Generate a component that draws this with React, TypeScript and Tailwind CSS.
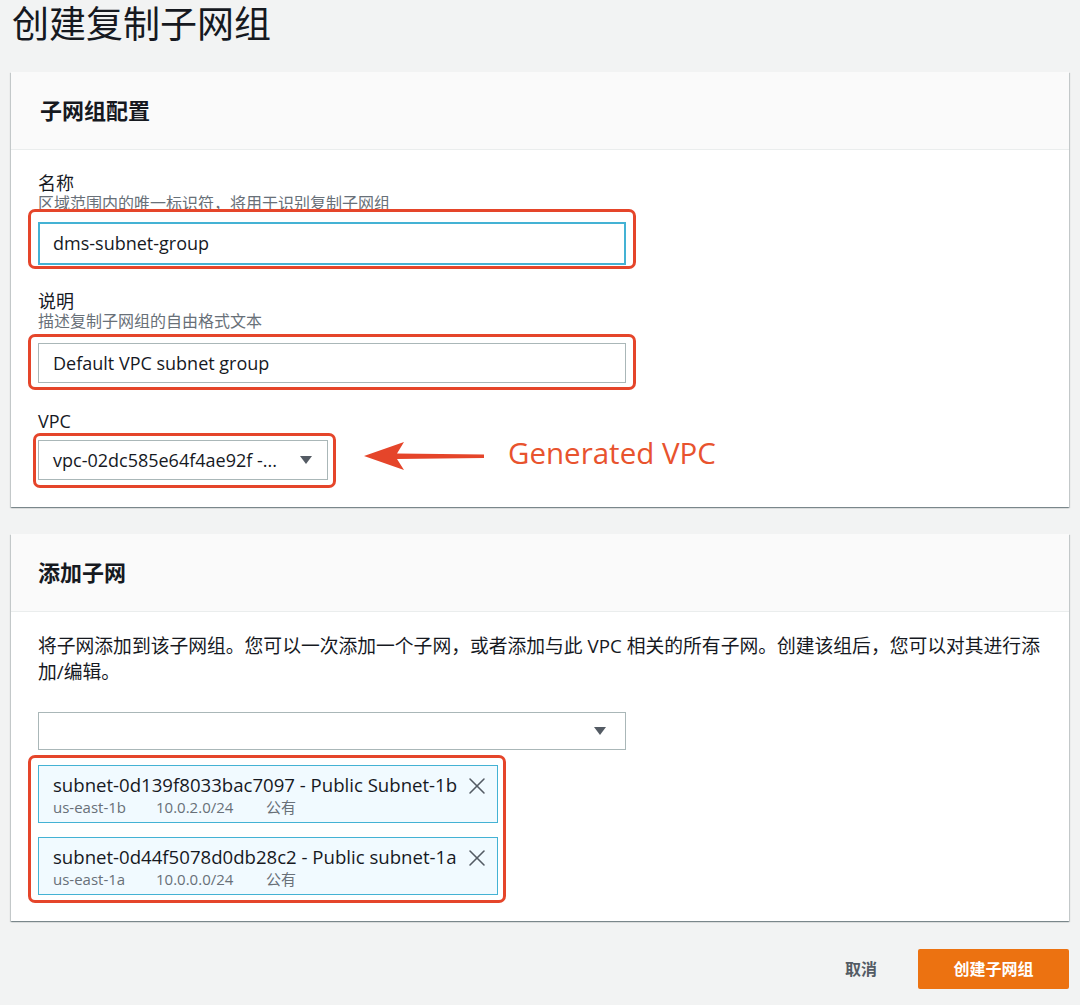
import { X } from 'lucide-react';

const font = "font-['Open_Sans','Noto_Sans_CJK_SC',sans-serif]";

function RedBox({ className }: { className: string }) {
  return <div className={`pointer-events-none absolute rounded-[7px] border-[3px] border-[#e5452a] ${className}`} />;
}

function Caret() {
  return (
    <svg width="14" height="10" viewBox="0 0 14 10" className="shrink-0">
      <path d="M1 1h12L7 9z" fill="#545b64" />
    </svg>
  );
}

const subnets = [
  { id: 'subnet-0d139f8033bac7097 - Public Subnet-1b', az: 'us-east-1b', cidr: '10.0.2.0/24' },
  { id: 'subnet-0d44f5078d0db28c2 - Public subnet-1a', az: 'us-east-1a', cidr: '10.0.0.0/24' },
];

export default function App() {
  return (
    <div className={`min-h-[1005px] bg-[#f2f3f3] pl-[11px] pr-[11px] pt-[2px] text-[#16191f] ${font}`}>
      <h1 className="pl-[1px] text-[37px] leading-[44px] font-normal text-[#16191f]">创建复制子网组</h1>

      {/* 子网组配置 */}
      <section className="mt-[26px] bg-white shadow-[0_1px_1px_0_rgba(0,28,36,0.3),1px_1px_1px_0_rgba(0,28,36,0.15),-1px_1px_1px_0_rgba(0,28,36,0.15)]">
        <div className="flex h-[78px] items-center border-b border-[#eaeded] bg-[#fafafa] px-[29px]">
          <h2 className="text-[22px] font-bold">子网组配置</h2>
        </div>
        <div className="px-[27px] pt-[22px] pb-[27px]">
          <div className="text-[18px] leading-[22px]">名称</div>
          <div className="text-[16px] leading-[19px] text-[#687078]">区域范围内的唯一标识符，将用于识别复制子网组</div>
          <div className="relative mt-[9px] w-[588px]">
            <RedBox className="-left-[10px] -right-[10px] -top-[13px] -bottom-[4px]" />
            <div className="flex h-[43px] items-center border-2 border-[#44b2d4] px-[13px] text-[18px]">dms-subnet-group</div>
          </div>

          <div className="mt-[25px] text-[18px] leading-[22px]">说明</div>
          <div className="text-[16px] leading-[19px] text-[#687078]">描述复制子网组的自由格式文本</div>
          <div className="relative mt-[12px] w-[588px]">
            <RedBox className="-left-[10px] -right-[10px] -top-[9px] -bottom-[7px]" />
            <div className="flex h-[40px] items-center border border-[#aab7b8] px-[14px] text-[18px]">Default VPC subnet group</div>
          </div>

          <div className="mt-[27px] text-[18px] leading-[22px]">VPC</div>
          <div className="mt-[8px] flex items-center">
            <div className="relative w-[290px]">
              <RedBox className="-left-[5px] -right-[8px] -top-[7px] -bottom-[8px]" />
              <div className="flex h-[40px] items-center justify-between border border-[#aab7b8] pl-[14px] pr-[14px] text-[18px]">
                <span>vpc-02dc585e64f4ae92f -...</span>
                <Caret />
              </div>
            </div>
            <svg width="122" height="32" viewBox="0 0 122 32" className="ml-[36px] -translate-y-[4px]">
              <path d="M0 16 L40 2 L33 13.5 L120 14.5 L120 18 L33 19 L40 30 Z" fill="#e5452a" />
            </svg>
            <span className="ml-[22px] -translate-y-[7px] text-[29.5px] leading-[34px] text-[#e8532e]">Generated VPC</span>
          </div>
        </div>
      </section>

      {/* 添加子网 */}
      <section className="mt-[27px] bg-white shadow-[0_1px_1px_0_rgba(0,28,36,0.3),1px_1px_1px_0_rgba(0,28,36,0.15),-1px_1px_1px_0_rgba(0,28,36,0.15)]">
        <div className="flex h-[78px] items-center border-b border-[#eaeded] bg-[#fafafa] px-[27px]">
          <h2 className="text-[22px] font-bold">添加子网</h2>
        </div>
        <div className="px-[27px] pt-[21px] pb-[26px]">
          <p className="text-[18.8px] leading-[26px]">
            将子网添加到该子网组。您可以一次添加一个子网，或者添加与此 VPC 相关的所有子网。创建该组后，您可以对其进行添加/编辑。
          </p>
          <div className="mt-[27px] flex h-[38px] w-[588px] items-center justify-end border border-[#aab7b8] pr-[18px]">
            <Caret />
          </div>
          <div className="relative mt-[15px] w-[460px]">
            <RedBox className="-left-[10px] -right-[8px] -top-[10px] -bottom-[8px]" />
            <div className="flex flex-col gap-[14px]">
              {subnets.map(s => (
                <div key={s.id} className="flex h-[58px] items-start justify-between border border-[#44b2d4] bg-[#f1faff] pl-[14px] pr-[6px] pt-[7px]">
                  <div>
                    <div className="text-[18.6px] leading-[24px] whitespace-nowrap">{s.id}</div>
                    <div className="mt-[1px] flex text-[15px] leading-[18px] text-[#687078]">
                      <span className="w-[103px]">{s.az}</span>
                      <span className="w-[110px]">{s.cidr}</span>
                      <span>公有</span>
                    </div>
                  </div>
                  <X size={28} strokeWidth={1.3} className="-mt-[1px] text-[#545b64]" />
                </div>
              ))}
            </div>
          </div>
        </div>
      </section>

      <div className="mt-[28px] flex items-center justify-end gap-[41px]">
        <button className="text-[16px] font-bold text-[#545b64]">取消</button>
        <button className="h-[40px] w-[151px] rounded-[2px] bg-[#ec7211] text-[16px] font-bold text-white">创建子网组</button>
      </div>
    </div>
  );
}
